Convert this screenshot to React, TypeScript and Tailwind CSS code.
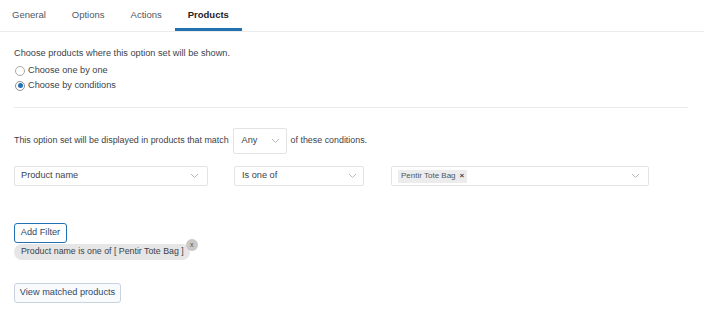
import React from "react";

const Chevron = () => (
  <svg width="9" height="6" viewBox="0 0 9 6" fill="none" className="shrink-0">
    <path d="M1 1l3.5 3.5L8 1" stroke="#b5b8bc" strokeWidth="1" />
  </svg>
);

export default function App() {
  const tabs = ["General", "Options", "Actions", "Products"];
  return (
    <div
      className="w-[704px] h-[315px] bg-white text-[#3c434a] overflow-hidden"
      style={{ fontFamily: '"Liberation Sans", Arial, sans-serif' }}
    >
      <div className="flex h-[32px] border-b border-[#ececec] text-[9.5px]">
        {tabs.map((t, i) => (
          <div
            key={t}
            className={
              "flex items-center px-[13px] " +
              (i === 0 ? "pl-[12px] " : "") +
              (t === "Products"
                ? "font-bold text-[#1d2327] border-b-[3px] border-[#2271b1] pt-[3px]"
                : "text-[#50575e]")
            }
          >
            {t}
          </div>
        ))}
      </div>

      <div className="pl-[14px] pr-[16px] text-[9.2px]">
        <div className="mt-[15px] leading-[12px] text-[#3c434a]">
          Choose products where this option set will be shown.
        </div>
        <div className="mt-[4px] flex items-center h-[15px]">
          <span className="w-[10px] h-[10px] rounded-full border border-[#a7aaad] bg-white mr-[3px] ml-[1px]" />
          <span>Choose one by one</span>
        </div>
        <div className="flex items-center h-[15px]">
          <span className="w-[10px] h-[10px] rounded-full border border-[#8c8f94] bg-white mr-[3px] ml-[1px] flex items-center justify-center">
            <span className="w-[5px] h-[5px] rounded-full bg-[#2271b1]" />
          </span>
          <span>Choose by conditions</span>
        </div>
        <div className="mt-[14px] border-t border-[#ebebeb] w-[674px]" />

        <div className="mt-[20px] flex items-center text-[8.9px]">
          <span>This option set will be displayed in products that match</span>
          <div className="ml-[4px] w-[54px] h-[26px] border border-[#e3e3e3] rounded-[2px] flex items-center justify-between pl-[8px] pr-[6px] text-[9.2px]">
            <span>Any</span>
            <Chevron />
          </div>
          <span className="ml-[4px]">of these conditions.</span>
        </div>

        <div className="mt-[12px] flex items-center">
          <div className="w-[194px] h-[20px] border border-[#e3e3e3] rounded-[2px] flex items-center justify-between pl-[6px] pr-[8px]">
            <span>Product name</span>
            <Chevron />
          </div>
          <div className="ml-[26px] w-[130px] h-[20px] border border-[#e3e3e3] rounded-[2px] flex items-center justify-between pl-[7px] pr-[6px]">
            <span>Is one of</span>
            <Chevron />
          </div>
          <div className="ml-[27px] w-[258px] h-[20px] border border-[#e3e3e3] rounded-[2px] flex items-center justify-between pl-[6px] pr-[8px]">
            <span className="h-[13px] px-[3px] bg-[#ececec] rounded-[1px] text-[8px] flex items-center gap-[4px] text-[#50575e] whitespace-nowrap">
              Pentir Tote Bag <span className="text-[8px] font-bold text-[#3c434a]">×</span>
            </span>
            <Chevron />
          </div>
        </div>

        <div className="mt-[37px] w-[53px] h-[20px] border border-[#2271b1] rounded-[3px] flex items-center justify-center text-[#2c4a6b] bg-white">
          Add Filter
        </div>
        <div className="relative mt-[1px] w-fit h-[16px] rounded-full bg-[#e6e6e6] flex items-center pl-[7px] pr-[6px] text-[8.8px] text-[#3c434a] whitespace-nowrap">
          Product name is one of [ Pentir Tote Bag ]
          <span className="absolute right-[-8px] top-[-5px] w-[12px] h-[12px] rounded-full bg-[#c8c8c8] flex items-center justify-center text-[7px] text-[#555]">
            x
          </span>
        </div>

        <div className="mt-[23px] w-[107px] h-[20px] border border-[#c9d3df] rounded-[3px] flex items-center justify-center text-[#2c4a6b] bg-[#f8fafc] whitespace-nowrap">
          View matched products
        </div>
      </div>
    </div>
  );
}
